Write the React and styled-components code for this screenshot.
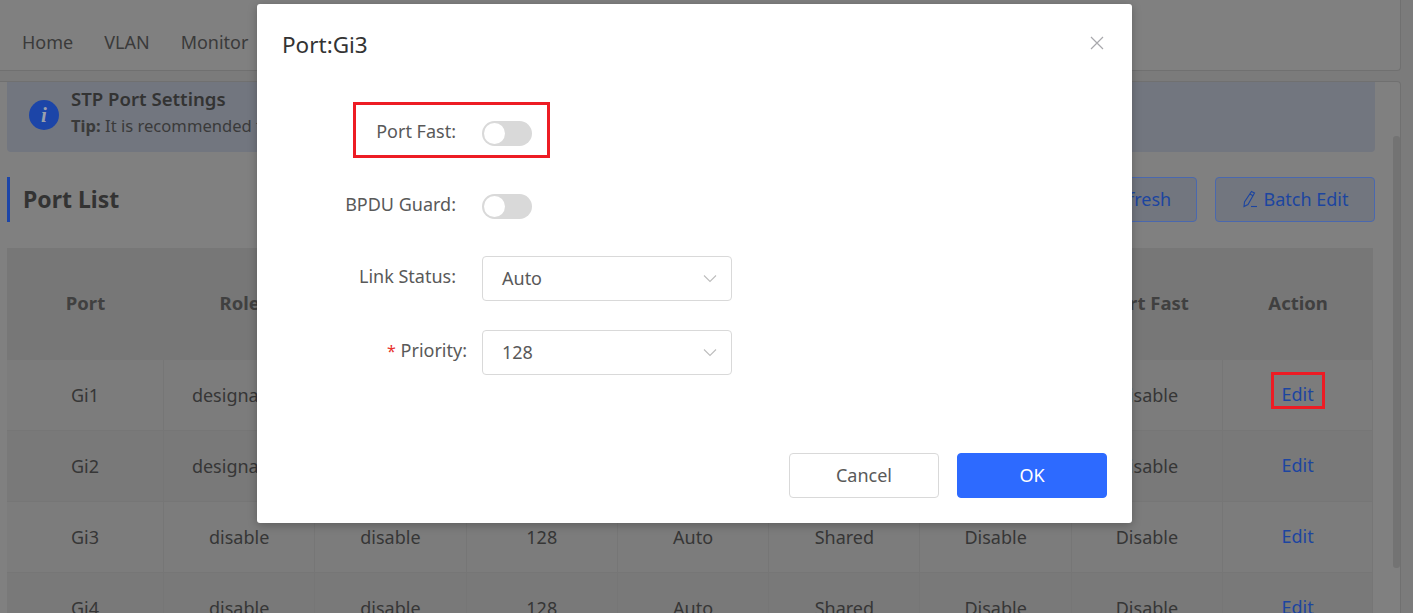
import React from "react";
import styled, { createGlobalStyle } from "styled-components";

const Global = createGlobalStyle`
  html, body { margin: 0; padding: 0; height: 100%; overflow: hidden; background: #7b7b7b; }
  * { box-sizing: border-box; }
  body { font-family: "Noto Sans", "Open Sans", "Liberation Sans", sans-serif; }
`;

const Page = styled.div`
  position: relative;
  width: 1413px;
  height: 613px;
  overflow: hidden;
  padding-right: 12px;
  display: flex;
  flex-direction: column;
  gap: 10px;
`;

const NavCard = styled.div`
  height: 71px;
  flex: none;
  background: #808080;
  border: 1px solid #707070;
  border-width: 0 1px 1px 0;
  border-bottom-right-radius: 4px;
  display: flex;
  gap: 31px;
  align-items: flex-end;
  padding: 0 0 15px 22px;
`;
const NavItem = styled.span`
  font-size: 18px;
  line-height: 26px;
  color: #3a3a3a;
`;

const ContentCard = styled.div`
  flex: 1;
  min-height: 0;
  position: relative;
  background: #808080;
  border: 1px solid #707070;
  border-width: 1px 1px 0 0;
  border-top-right-radius: 4px;
  padding: 0 25px 0 7px;
`;
const Scrollbar = styled.div`
  position: absolute;
  top: 54px;
  right: 0;
  width: 7px;
  height: 432px;
  border-radius: 3px;
  background: #737373;
`;
const Banner = styled.div`
  height: 70px;
  background: #72767f;
  border-radius: 0 0 4px 4px;
  display: flex;
  align-items: flex-start;
  gap: 12px;
  padding: 3px 0 0 22px;
`;
const BannerIcon = styled.svg`
  flex: none;
  width: 30px;
  height: 30px;
  margin-top: 15px;
`;
const BannerText = styled.div`
  display: flex;
  flex-direction: column;
`;
const BannerTitle = styled.div`
  font-size: 18.6px;
  line-height: 28px;
  font-weight: 600;
  color: #333;
`;
const BannerTip = styled.div`
  font-size: 16.6px;
  line-height: 26px;
  color: #3a3a3a;
  white-space: nowrap;
  b { font-weight: 700; }
`;

const ListHead = styled.div`
  height: 45px;
  margin-top: 25px;
  display: flex;
  align-items: center;
  justify-content: space-between;
  border-left: 3px solid #1c45a8;
  padding-left: 13px;
`;
const ListTitle = styled.h2`
  margin: -1px 0 0;
  font-size: 23px;
  font-weight: 700;
  color: #333;
`;
const Actions = styled.div`
  display: flex;
  gap: 18px;
`;
const OutlineBtn = styled.button`
  height: 45px;
  width: ${(p) => p.$w}px;
  border: 1px solid #4a68ae;
  border-radius: 4px;
  background: #72767f;
  color: #1c45a0;
  font: inherit;
  font-size: 18px;
  display: flex;
  align-items: center;
  justify-content: center;
  gap: 6px;
  padding: 0 6px 2px ${(p) => p.$pl}px;
`;

const Table = styled.div`
  margin-top: 26px;
  display: grid;
  grid-template-columns: 157px repeat(7, 151.3px) 150px;
`;
const HeadCell = styled.div`
  height: 112px;
  background: #777777;
  display: flex;
  align-items: center;
  justify-content: center;
  font-size: 18.5px;
  font-weight: 700;
  color: #404040;
  white-space: nowrap;
  padding-bottom: 4px;
`;
const Cell = styled.div`
  height: 71px;
  background: ${(p) => (p.$odd ? "#7c7c7c" : "#797979")};
  border-right: 1px solid #767676;
  border-bottom: 1px solid #767676;
  display: flex;
  align-items: center;
  justify-content: center;
  font-size: 18px;
  color: #363636;
  white-space: nowrap;
`;
const EditLink = styled.a`
  color: #1c45a0;
  margin-top: -2px;
`;

const Modal = styled.div`
  position: absolute;
  left: 257px;
  top: 4px;
  width: 875px;
  height: 519px;
  background: #fff;
  border-radius: 3px;
  box-shadow: 0 2px 10px rgba(0, 0, 0, 0.25);
  display: flex;
  flex-direction: column;
  padding: 0 25px;
`;
const ModalHead = styled.div`
  height: 80px;
  display: flex;
  align-items: center;
  justify-content: space-between;
  flex: none;
`;
const ModalTitle = styled.div`
  font-size: 22.5px;
  color: #333;
`;
const CloseIcon = styled.svg`
  width: 14px;
  height: 14px;
  margin-right: 3.5px;
  margin-top: -2px;
  stroke: #a8a8ac;
  stroke-width: 1.2;
  fill: none;
`;
const Form = styled.div`
  padding-top: 27px;
  flex: 1;
`;
const Row = styled.div`
  display: flex;
  align-items: center;
  height: 44px;
  margin-bottom: ${(p) => p.$mb}px;
`;
const Label = styled.div`
  width: 200px;
  padding-right: ${(p) => (p.$tight ? 15 : 26)}px;
  text-align: right;
  font-size: 18px;
  color: #595959;
  white-space: nowrap;
  margin-top: -4px;
  span { color: #e8322d; font-size: 16px; }
`;
const Toggle = styled.div`
  width: 50px;
  height: 25px;
  border-radius: 13px;
  background: #d9d9d9;
  padding: 2px;
`;
const Knob = styled.div`
  width: 21px;
  height: 21px;
  border-radius: 50%;
  background: #fff;
`;
const SelectBox = styled.div`
  width: 250px;
  height: 45px;
  border: 1px solid #d9d9d9;
  border-radius: 4px;
  display: flex;
  align-items: center;
  justify-content: space-between;
  padding: 0 14px 0 19px;
  font-size: 18px;
  color: #595959;
`;
const Chevron = styled.svg`
  width: 14px;
  height: 9px;
  stroke: #bdbdbd;
  stroke-width: 1.1;
  fill: none;
`;
const Footer = styled.div`
  display: flex;
  justify-content: flex-end;
  gap: 18px;
  padding-bottom: 25px;
`;
const FooterBtn = styled.button`
  width: 150px;
  height: 45px;
  border-radius: 4px;
  font: inherit;
  font-size: 18px;
  padding: 0 0 2px;
  border: 1px solid ${(p) => (p.$primary ? "#2d6aff" : "#d9d9d9")};
  background: ${(p) => (p.$primary ? "#2d6aff" : "#fff")};
  color: ${(p) => (p.$primary ? "#fff" : "#595959")};
`;
const Marker = styled.div`
  position: absolute;
  left: ${(p) => p.$x}px;
  top: ${(p) => p.$y}px;
  width: ${(p) => p.$w}px;
  height: ${(p) => p.$h}px;
  border: 3px solid #ed1c24;
`;

const heads = ["Port", "Role", "Status", "Priority", "Link Status", "Link Type", "BPDU Guard", "Port Fast", "Action"];
const rows = [
  ["Gi1", "designated", "forwarding", "128", "Auto", "Shared", "Disable", "Disable"],
  ["Gi2", "designated", "forwarding", "128", "Auto", "Shared", "Disable", "Disable"],
  ["Gi3", "disable", "disable", "128", "Auto", "Shared", "Disable", "Disable"],
  ["Gi4", "disable", "disable", "128", "Auto", "Shared", "Disable", "Disable"],
];

export default function App() {
  return (
    <>
      <Global />
      <Page>
        <NavCard>
          <NavItem>Home</NavItem>
          <NavItem>VLAN</NavItem>
          <NavItem>Monitor</NavItem>
        </NavCard>
        <ContentCard>
          <Scrollbar />
          <Banner>
            <BannerIcon viewBox="0 0 30 30">
              <circle cx="15" cy="15" r="15" fill="#1c45a8" />
              <text x="15" y="22" textAnchor="middle" fontFamily="Liberation Serif" fontStyle="italic" fontWeight="700" fontSize="21" fill="#9aa0ad">i</text>
            </BannerIcon>
            <BannerText>
              <BannerTitle>STP Port Settings</BannerTitle>
              <BannerTip><b>Tip:</b> It is recommended to enable Port Fast on ports connected to terminals.</BannerTip>
            </BannerText>
          </Banner>
          <ListHead>
            <ListTitle>Port List</ListTitle>
            <Actions>
              <OutlineBtn $w={120} $pl={10}>Refresh</OutlineBtn>
              <OutlineBtn $w={160} $pl={6}>
                <svg width="16" height="18" viewBox="0 0 16 18" fill="none" stroke="#1c45a0" strokeWidth="1.1">
                  <path d="M9.5 1.5 12.5 3 6 14.5 2 16.5 2.5 12Z" />
                  <path d="M8 4 11 5.7" />
                  <path d="M9 16.5h6" />
                </svg>
                Batch Edit
              </OutlineBtn>
            </Actions>
          </ListHead>
          <Table>
            {heads.map((h) => <HeadCell key={h}>{h}</HeadCell>)}
            {rows.map((r, i) => (
              <React.Fragment key={r[0]}>
                {r.map((c, j) => <Cell key={j} $odd={i % 2 === 0}>{c}</Cell>)}
                <Cell $odd={i % 2 === 0}><EditLink>Edit</EditLink></Cell>
              </React.Fragment>
            ))}
          </Table>
        </ContentCard>
        <Marker $x={1271} $y={372} $w={54} $h={37} />
        <Modal>
          <ModalHead>
            <ModalTitle>Port:Gi3</ModalTitle>
            <CloseIcon viewBox="0 0 14 14"><path d="M1 1 13 13M13 1 1 13" /></CloseIcon>
          </ModalHead>
          <Form>
            <Row $mb={29}><Label>Port Fast:</Label><Toggle><Knob /></Toggle></Row>
            <Row $mb={28}><Label>BPDU Guard:</Label><Toggle><Knob /></Toggle></Row>
            <Row $mb={30}>
              <Label>Link Status:</Label>
              <SelectBox>Auto<Chevron viewBox="0 0 14 9"><path d="M1 1.5 7 7.5 13 1.5" /></Chevron></SelectBox>
            </Row>
            <Row $mb={0}>
              <Label $tight><span>*</span> Priority:</Label>
              <SelectBox>128<Chevron viewBox="0 0 14 9"><path d="M1 1.5 7 7.5 13 1.5" /></Chevron></SelectBox>
            </Row>
          </Form>
          <Footer>
            <FooterBtn>Cancel</FooterBtn>
            <FooterBtn $primary>OK</FooterBtn>
          </Footer>
          <Marker $x={96} $y={98} $w={197} $h={56} />
        </Modal>
      </Page>
    </>
  );
}
